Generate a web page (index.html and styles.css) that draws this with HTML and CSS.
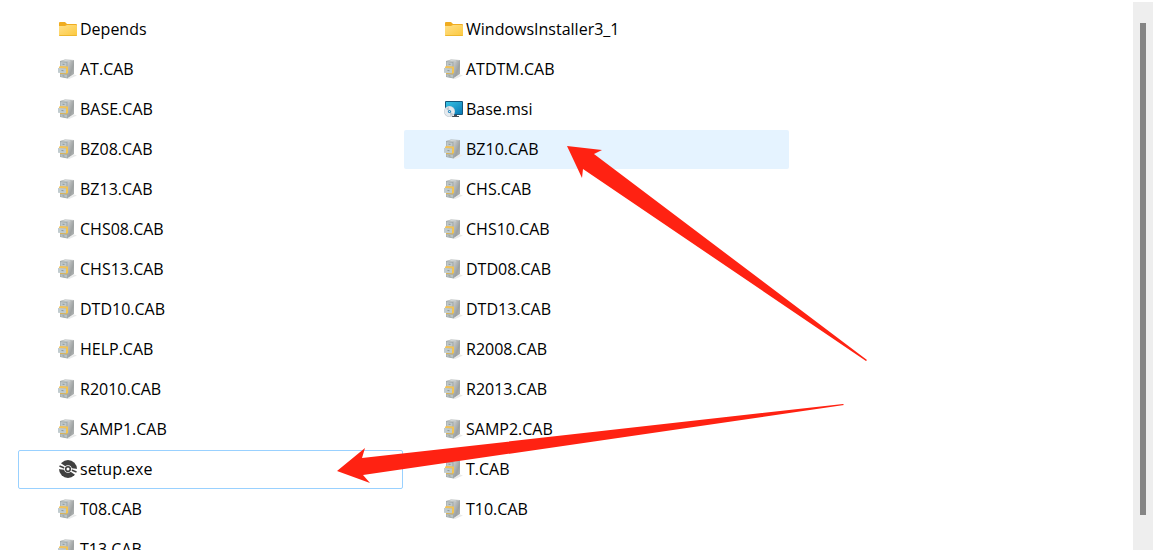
FILE: index.html
```
<!DOCTYPE html>
<html lang="en">
<head>
  <meta charset="UTF-8">
  <title>Setup files</title>
  <meta name="viewport" content="width=device-width, initial-scale=1.0">
  <link rel="stylesheet" href="styles.css">
</head>
<body>
<!-- shared icons -->
<svg class="sprite" aria-hidden="true">
  <defs>
    <linearGradient id="folderFill" x1="0" y1="0" x2="1" y2="1">
      <stop offset="0" stop-color="#ffe08a"/>
      <stop offset="1" stop-color="#fcc83c"/>
    </linearGradient>
    <linearGradient id="sideFill" x1="0" y1="0" x2="1" y2="1">
      <stop offset="0" stop-color="#d2d4d4"/>
      <stop offset="0.6" stop-color="#9da1a1"/>
      <stop offset="1" stop-color="#b9bdbc"/>
    </linearGradient>
    <linearGradient id="screenFill" x1="0" y1="0" x2="1" y2="1">
      <stop offset="0" stop-color="#38c3e4"/>
      <stop offset="1" stop-color="#0879b5"/>
    </linearGradient>
  </defs>
  <symbol id="folder" viewBox="0 0 20 20">
    <path d="M1 4a1 1 0 0 1 1-1h5l2 2h9a1 1 0 0 1 1 1v2H1z" fill="#f0ac20"/>
    <path d="M1 7h6l2-1h9a1 1 0 0 1 1 1v9a1 1 0 0 1-1 1H2a1 1 0 0 1-1-1z" fill="url(#folderFill)"/>
    <path d="M1 16h18a1 1 0 0 1-1 1H2a1 1 0 0 1-1-1z" fill="#edb72f"/>
  </symbol>
  <symbol id="cab" viewBox="0 0 20 20">
    <path d="M9 19.500l7-4 3 1-8 3.500z" fill="#e9eaea"/>
    <path d="M2 2L7 .5l9 .5-6.500 2z" fill="#a9afaf"/>
    <path d="M3 2l4.500-1 6.500.4-5 1.200z" fill="#d5d9d9"/>
    <path d="M9 3l7-2v14L9 19.500z" fill="url(#sideFill)"/>
    <path d="M2 2l7.500 1v16.500L2 18z" fill="#9ca5a6"/>
    <path d="M2.500 3l6 .8v4l-6-.5z" fill="#c0c8c9"/>
    <path d="M1 8l1-1 8 .5v2H1z" fill="#f2c35a"/>
    <path d="M0 9l8 .5v5l-8-.8z" fill="#c0cbce"/>
    <path d="M8 9.500l2-1.500v6l-2 1z" fill="#f3c550"/>
    <path d="M2 14l7 .5v1l-7-.6z" fill="#dfb44e"/>
    <path d="M2.500 15.200l6.500.6v3l-6.500-1.200z" fill="#b9c2c3"/>
    <path d="M4.500 5.200l2 .2M3.500 11.500l2 .2M4.500 16.800l2 .3" stroke="#8e989a"/>
  </symbol>
  <symbol id="msi" viewBox="0 0 20 20">
    <path d="M8 17h7v1H8zM10 15h3v2h-3z" fill="#454d55"/>
    <rect x="1" y="2" width="18" height="14" rx="1" fill="#14567b"/>
    <rect x="2" y="3" width="16" height="12" fill="url(#screenFill)"/>
    <circle cx="5.500" cy="12.500" r="5.500" fill="#c5ced5"/>
    <circle cx="5.500" cy="12.500" r="4.900" fill="#e5eaee"/>
    <path d="M5.500 12.500L2 10a5 5 0 0 1 3-2zM5.500 12.500l4 2.500a5 5 0 0 1-3 2z" fill="#bdc8d0"/>
    <circle cx="5.500" cy="12.500" r="1.600" fill="#2b8ac1"/>
    <circle cx="5.500" cy="12.500" r=".6" fill="#fff"/>
  </symbol>
  <symbol id="setup" viewBox="0 0 20 20">
    <circle cx="10" cy="10" r="9" fill="#404040"/>
    <path d="M10 9L1 3l-1 7 8 1zM10 11l9 6 1-7-8-1z" fill="#fff"/>
    <path d="M1.500 7l5 2M18.500 13l-5-2" stroke="#404040" stroke-width="1.600"/>
    <circle cx="10" cy="10" r="3.800" fill="#fff"/>
    <circle cx="10" cy="10" r="2.300" fill="none" stroke="#404040" stroke-width="1.600"/>
  </symbol>
</svg>

<div class="window">
  <main class="pane">
    <ul class="files">
      <li><a class="file" href="#"><svg class="icon"><use href="#folder"/></svg>Depends</a></li>
      <li><a class="file" href="#"><svg class="icon"><use href="#folder"/></svg>WindowsInstaller3_1</a></li>
      <li><a class="file" href="#"><svg class="icon"><use href="#cab"/></svg>AT.CAB</a></li>
      <li><a class="file" href="#"><svg class="icon"><use href="#cab"/></svg>ATDTM.CAB</a></li>
      <li><a class="file" href="#"><svg class="icon"><use href="#cab"/></svg>BASE.CAB</a></li>
      <li><a class="file" href="#"><svg class="icon"><use href="#msi"/></svg>Base.msi</a></li>
      <li><a class="file" href="#"><svg class="icon"><use href="#cab"/></svg>BZ08.CAB</a></li>
      <li><a class="file hovered" href="#"><svg class="icon"><use href="#cab"/></svg>BZ10.CAB</a></li>
      <li><a class="file" href="#"><svg class="icon"><use href="#cab"/></svg>BZ13.CAB</a></li>
      <li><a class="file" href="#"><svg class="icon"><use href="#cab"/></svg>CHS.CAB</a></li>
      <li><a class="file" href="#"><svg class="icon"><use href="#cab"/></svg>CHS08.CAB</a></li>
      <li><a class="file" href="#"><svg class="icon"><use href="#cab"/></svg>CHS10.CAB</a></li>
      <li><a class="file" href="#"><svg class="icon"><use href="#cab"/></svg>CHS13.CAB</a></li>
      <li><a class="file" href="#"><svg class="icon"><use href="#cab"/></svg>DTD08.CAB</a></li>
      <li><a class="file" href="#"><svg class="icon"><use href="#cab"/></svg>DTD10.CAB</a></li>
      <li><a class="file" href="#"><svg class="icon"><use href="#cab"/></svg>DTD13.CAB</a></li>
      <li><a class="file" href="#"><svg class="icon"><use href="#cab"/></svg>HELP.CAB</a></li>
      <li><a class="file" href="#"><svg class="icon"><use href="#cab"/></svg>R2008.CAB</a></li>
      <li><a class="file" href="#"><svg class="icon"><use href="#cab"/></svg>R2010.CAB</a></li>
      <li><a class="file" href="#"><svg class="icon"><use href="#cab"/></svg>R2013.CAB</a></li>
      <li><a class="file" href="#"><svg class="icon"><use href="#cab"/></svg>SAMP1.CAB</a></li>
      <li><a class="file" href="#"><svg class="icon"><use href="#cab"/></svg>SAMP2.CAB</a></li>
      <li><a class="file focused" href="#"><svg class="icon"><use href="#setup"/></svg>setup.exe</a></li>
      <li><a class="file" href="#"><svg class="icon"><use href="#cab"/></svg>T.CAB</a></li>
      <li><a class="file" href="#"><svg class="icon"><use href="#cab"/></svg>T08.CAB</a></li>
      <li><a class="file" href="#"><svg class="icon"><use href="#cab"/></svg>T10.CAB</a></li>
      <li><a class="file" href="#"><svg class="icon"><use href="#cab"/></svg>T13.CAB</a></li>
    </ul>
  </main>
  <div class="scrollbar"><div class="thumb"></div></div>

  <!-- arrows drawn over the list -->
  <svg class="arrows" width="900" height="500" viewBox="0 0 900 500" aria-hidden="true">
    <path d="M567 146L602 150L594 154L867 360L866 361L583 169L582 178z"/>
    <path d="M337 471L365 448L362 458L843 404L844 405L363 475L370 483z"/>
  </svg>
</div>
</body>
</html>
```
FILE: styles.css
```
* { box-sizing: border-box; margin: 0; padding: 0; }
body {
  font-family: 'Open Sans', sans-serif;
  font-size: 16px;
  line-height: 20px;
  background: #fff;
  color: #000;
}
.sprite {
  position: absolute;
  width: 0;
  height: 0;
}
.window {
  position: relative;
  display: flex;
  height: 100vh;
  overflow: hidden;
}
.pane {
  flex: 1;
  overflow: hidden;
  padding: 10px 0 0 18px;
}
.files {
  display: grid;
  grid-template-columns: repeat(auto-fill, 385px);
  gap: 1px;
  list-style: none;
}
.file {
  display: flex;
  align-items: center;
  gap: 2px;
  height: 39px;
  padding: 0 0 2px 39px;
  border: 1px solid transparent;
  border-radius: 2px;
  color: inherit;
  text-decoration: none;
}
.hovered {
  background: #e5f3ff;
}
.focused {
  border-color: #99d1ff;
}
.icon {
  width: 20px;
  height: 20px;
}
.scrollbar {
  width: 20px;
  margin-top: 2px;
  padding: 21px 7px 35px;
  background: #eee;
}
.thumb {
  height: 100%;
  background: #858585;
}
.arrows {
  position: absolute;
  top: 0;
  left: 0;
  fill: #ff2212;
  pointer-events: none;
}
```
